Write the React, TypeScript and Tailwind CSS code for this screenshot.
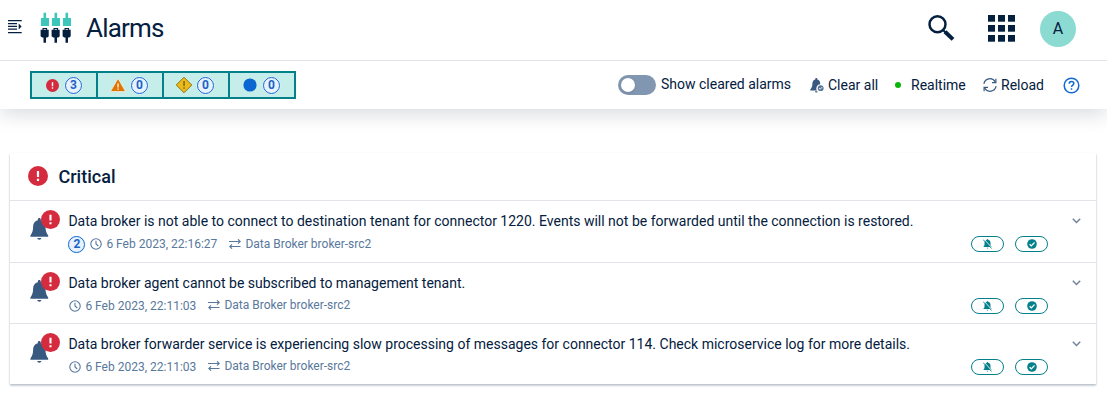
import React from "react";

type IconProps = { className?: string };

const MenuIcon = () => (
  <svg width="14" height="14" viewBox="0 0 14 14" fill="#04203e">
    <path d="M0 0h13.700v1.300H0zM0 3h9v1.300H0zM0 5.700h9V7H0zM0 8.400h9v1.300H0zM0 12h13.700v1.300H0z" />
    <path d="M10.700 3.500v6l2.900-3z" />
  </svg>
);

const LogoIcon = () => (
  <svg width="32" height="32" viewBox="0 0 32 32">
    {[0, 11, 22].map((x) => (
      <g key={x} transform={`translate(${x} 0)`}>
        <path fill="#3ec6bb" d="M3.500 1.700h2.600V7H9v8H.9V7h2.600z" />
        <path
          fill="#04203e"
          fillRule="evenodd"
          d="M2.500 17h4.600v1.800h1.600v6.400L7.400 26.400H6v5.400H3.500v-5.400H2.200L.6 25.200v-6.400h1.900zM3.700 18v.8h2.200V18z"
        />
      </g>
    ))}
  </svg>
);

const SearchIcon = () => (
  <svg width="28" height="28" viewBox="0 0 28 28" fill="none" stroke="#04203e">
    <circle cx="10.500" cy="10.200" r="8" strokeWidth="2.500" />
    <path d="M16 16l3 3" strokeWidth="2" />
    <path d="M18 17.700l8 7.700" strokeWidth="4" />
  </svg>
);

const GridIcon = () => (
  <svg width="27" height="27" viewBox="0 0 27 27" fill="#04203e">
    {[0, 10, 20].map((y) =>
      [0, 10, 20].map((x) => <rect key={`${x}-${y}`} x={x} y={y} width="7" height="6.700" />)
    )}
  </svg>
);

const CriticalIcon = ({ className }: IconProps) => (
  <svg className={className} viewBox="0 0 20 20">
    <circle cx="10" cy="10" r="10" fill="#d52b3f" />
    <path d="M8.900 5h2.200v6H8.900zM8.900 12.800h2.200V15H8.900z" fill="#fff" />
  </svg>
);

const WarningIcon = () => (
  <svg width="16" height="14" viewBox="0 0 16 14">
    <path d="M8 .5L15.500 13.500H.5z" fill="#e07400" stroke="#fff" strokeOpacity=".6" strokeWidth="1" />
    <path d="M7.400 5.500h1.300v4H7.400zM7.400 10.500h1.300v1.300H7.400z" fill="#fff" />
  </svg>
);

const MinorIcon = () => (
  <svg width="18" height="18" viewBox="0 0 18 18">
    <path d="M9 1.200L16.800 9 9 16.800 1.200 9z" fill="#ecb91c" stroke="#8c7a18" />
    <path d="M8.400 5h1.300v5H8.400zM8.400 11.300h1.300v1.400H8.400z" fill="#6f5c0c" />
  </svg>
);

const DotIcon = () => (
  <svg width="14" height="14" viewBox="0 0 14 14">
    <circle cx="7" cy="7" r="6.600" fill="#0a66d0" />
  </svg>
);

const BellIcon = () => (
  <svg width="19" height="22" viewBox="0 0 19 22" fill="#385a80">
    <path d="M9.300 0c.9 0 1.500.6 1.500 1.500v.7c2.900.7 4.700 3.100 4.700 6.300 0 4 .8 6.500 2.700 8.900v1.400H.4v-1.400C2.300 15 3.100 12.500 3.100 8.500c0-3.200 1.800-5.600 4.700-6.300v-.7C7.800.6 8.400 0 9.300 0zM7.300 20h4c0 1-.9 1.700-2 1.700s-2-.7-2-1.700z" />
  </svg>
);

const BellCheckIcon = () => (
  <svg width="14" height="15" viewBox="0 0 14 15">
    <path d="M6.300 0c.6 0 1 .4 1 1v.5c2 .5 2.900 2.100 2.900 4.100v.7A4 4 0 0 0 7 12.500H.2v-.8C1.700 10 2.400 8.500 2.400 5.600c0-2 .9-3.600 2.900-4.100V1c0-.6.400-1 1-1zM5 13.300h2.600c0 .8-.6 1.300-1.300 1.300S5 14.100 5 13.300z" fill="#385a80" />
    <circle cx="10.700" cy="10.200" r="2.900" fill="#5a7696" />
    <path d="M9.200 10.200l1 1 1.900-2" fill="none" stroke="#fff" strokeWidth=".9" />
  </svg>
);

const ReloadIcon = () => (
  <svg width="14" height="14" viewBox="0 0 14 14" fill="none" stroke="#385a80" strokeWidth="1.200">
    <path d="M.9 5.800A6.100 6.100 0 0 1 12.300 4M13.100 8.200A6.100 6.100 0 0 1 1.700 10" />
    <path d="M12.900.7v3.900H9M1.100 13.300V9.400H5" />
  </svg>
);

const HelpIcon = () => (
  <svg width="17" height="17" viewBox="0 0 17 17" fill="none" stroke="#1268d3" strokeWidth="1.500">
    <circle cx="8.500" cy="8.500" r="7.300" />
    <path d="M6.200 6.800c0-1.400 1-2.300 2.300-2.300s2.300.9 2.300 2c0 1.600-2.300 1.700-2.300 3.500M8.500 11.200v1.600" />
  </svg>
);

const ClockIcon = () => (
  <svg width="12" height="12" viewBox="0 0 12 12" fill="none" stroke="#58789c">
    <circle cx="6" cy="6" r="5.200" strokeWidth="1.100" />
    <path d="M6 2.800V6l2.300 2" strokeWidth="1.100" />
  </svg>
);

const SwapIcon = () => (
  <svg width="12" height="10" viewBox="0 0 12 10" fill="none" stroke="#58789c" strokeWidth="1.100">
    <path d="M0 2.500h11M11.500 7.500h-11M9 .3l2.300 2.200L9 4.700M3 5.300L.7 7.500 3 9.700" />
  </svg>
);

const ChevronIcon = () => (
  <svg width="9" height="6" viewBox="0 0 9 6" fill="none" stroke="#71829a" strokeWidth="1.500">
    <path d="M.8.800l3.700 3.700L8.200.8" />
  </svg>
);

const BellOffIcon = () => (
  <svg width="9" height="10" viewBox="0 0 9 10">
    <path d="M4.500 0c.5 0 .7.300.7.700 1.500.3 2.300 1.500 2.300 3v2.600l1 1.200v.6H.5v-.6l1-1.200V3.700c0-1.500.8-2.700 2.300-3 0-.4.200-.7.700-.7zM3.600 8.800h1.800c0 .5-.4.800-.9.800s-.9-.3-.9-.8z" fill="#04808b" />
    <path d="M.8 0l8.400 9.100" stroke="#fff" strokeWidth="1" />
    <path d="M0 .5l8.600 9" stroke="#04808b" strokeWidth=".9" />
  </svg>
);

const CheckIcon = () => (
  <svg width="10" height="10" viewBox="0 0 10 10">
    <circle cx="5" cy="5" r="4.800" fill="#04808b" />
    <path d="M2.600 5.200l1.700 1.600L7.500 3.500" fill="none" stroke="#fff" strokeWidth="1.200" />
  </svg>
);

const Count = ({ value }: { value: number }) => (
  <span className="flex h-[17px] w-[17px] shrink-0 items-center justify-center rounded-full border border-[#1268d3] bg-[#e8f2fd] text-[12px] leading-none font-bold text-[#1c62c4] ring-[0.5px] ring-[#e8f2fd]">
    {value}
  </span>
);

const filters = [
  { icon: <CriticalIcon className="h-[13px] w-[13px]" />, count: 3 },
  { icon: <WarningIcon />, count: 0 },
  { icon: <MinorIcon />, count: 0 },
  { icon: <DotIcon />, count: 0 },
];

type Alarm = { text: string; time: string; count?: number };

const alarms: Alarm[] = [
  {
    text: "Data broker is not able to connect to destination tenant for connector 1220. Events will not be forwarded until the connection is restored.",
    time: "6 Feb 2023, 22:16:27",
    count: 2,
  },
  { text: "Data broker agent cannot be subscribed to management tenant.", time: "6 Feb 2023, 22:11:03" },
  {
    text: "Data broker forwarder service is experiencing slow processing of messages for connector 114. Check microservice log for more details.",
    time: "6 Feb 2023, 22:11:03",
  },
];

const AlarmRow = ({ alarm }: { alarm: Alarm }) => (
  <div className={`flex border-t border-[#e1e4e8] ${alarm.count ? "h-[62px]" : "h-[61px]"}`}>
    <div className="relative w-[58.4px] shrink-0 pt-[17px] pl-5">
      <BellIcon />
      <span className="absolute top-[9px] left-[30.500px] rounded-full">
        <CriticalIcon className="h-[19px] w-[19px]" />
      </span>
    </div>
    <div className="min-w-0 flex-1 pt-[10px]">
      <div className="text-[14px] leading-5 whitespace-nowrap text-[#04203e]">{alarm.text}</div>
      <div
        className={`flex h-[18px] items-center text-[12px] whitespace-nowrap text-[#58789c] ${alarm.count ? "mt-1" : "mt-[3px]"}`}
      >
        {alarm.count ? (
          <span className="mr-[5px]">
            <Count value={alarm.count} />
          </span>
        ) : (
          <span className="w-px" />
        )}
        <span className={`flex items-center ${alarm.count ? "" : "pt-0.5"}`}>
          <ClockIcon />
          <span className="ml-1 w-[111px]">{alarm.time}</span>
        </span>
        <span className="ml-3">
          <SwapIcon />
        </span>
        <span className="ml-1">Data Broker broker-src2</span>
      </div>
    </div>
    <div className="flex shrink-0 gap-[11px] pt-[35px]">
      <button className="flex h-4 w-[33px] items-center justify-center rounded-full border border-[#04808b]">
        <BellOffIcon />
      </button>
      <button className="flex h-4 w-[33px] items-center justify-center rounded-full border border-[#04808b]">
        <CheckIcon />
      </button>
    </div>
    <div className="w-[48px] shrink-0 pt-[17px] pl-[24px]">
      <ChevronIcon />
    </div>
  </div>
);

export default function App() {
  return (
    <div className="flex h-[402px] w-[1107px] flex-col overflow-hidden bg-white font-[Roboto,sans-serif] text-[#04203e]">
      <header className="relative z-10 flex h-[61px] shrink-0 items-center border-b border-[#e1e4e8] bg-white pr-[31px] pl-2">
        <div className="-mt-1.5">
          <MenuIcon />
        </div>
        <div className="-mt-1.5 ml-[18px]">
          <LogoIcon />
        </div>
        <h1 className="-mt-1 ml-[14px] text-[26px] leading-8 tracking-[-0.8px]">Alarms</h1>
        <div className="-mt-1 ml-auto">
          <SearchIcon />
        </div>
        <div className="-mt-1 ml-[33px]">
          <GridIcon />
        </div>
        <div className="-mt-[3px] ml-[25px] flex h-9 w-9 items-center justify-center rounded-full bg-[#8bdbd3] text-[16px]">
          A
        </div>
      </header>

      <div className="flex h-12 shrink-0 items-center pr-[27px] pl-[30px] text-[14px] shadow-[0_5px_20px_rgba(4,32,62,0.16)]">
        <div className="flex h-7 divide-x-2 divide-[#04808b] border-2 border-[#04808b] bg-[#c5ede9]">
          {filters.map((f, i) => (
            <div
              key={i}
              className={`flex items-center justify-end gap-1 pr-[14px] ${i === 3 ? "w-[64px]" : "w-[66px]"}`}
            >
              <span className="flex w-[18px] items-center justify-center">{f.icon}</span>
              <Count value={f.count} />
            </div>
          ))}
        </div>
        <div className="ml-auto flex h-5 w-[38px] items-center rounded-full bg-[#8196b0] pl-[3px]">
          <span className="h-[14px] w-[14px] rounded-full bg-white shadow-sm" />
        </div>
        <span className="-mt-0.5 ml-[5px] w-[130px] whitespace-nowrap">Show cleared alarms</span>
        <span className="ml-[19px]">
          <BellCheckIcon />
        </span>
        <span className="ml-1 w-[51px] whitespace-nowrap">Clear all</span>
        <span className="ml-4 h-1.5 w-1.5 rounded-full bg-[#0ab50a]" />
        <span className="ml-[10px] w-[55px]">Realtime</span>
        <span className="ml-[17px]">
          <ReloadIcon />
        </span>
        <span className="ml-1 w-[43px]">Reload</span>
        <span className="ml-[19px]">
          <HelpIcon />
        </span>
      </div>

      <section className="mr-[11px] ml-[10px] mt-[44px] shrink-0 bg-white shadow-[0_1px_2px_0_rgba(4,32,62,0.2),0_2px_2px_0_rgba(4,32,62,0.14)]">
        <div className="flex h-[47px] items-center pl-[18px]">
          <CriticalIcon className="-mt-px h-5 w-5" />
          <h2 className="-mt-px ml-[10.500px] text-[18px] font-medium">Critical</h2>
        </div>
        {alarms.map((a, i) => (
          <AlarmRow key={i} alarm={a} />
        ))}
      </section>
    </div>
  );
}
